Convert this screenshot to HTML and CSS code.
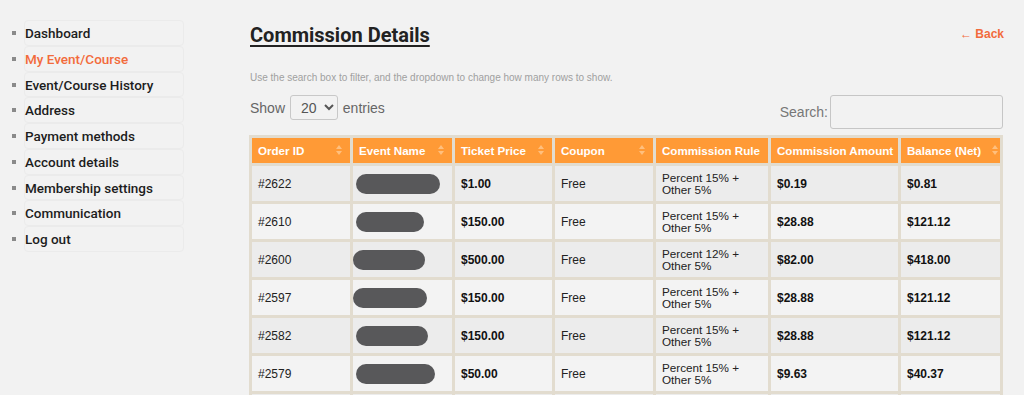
FILE: index.html
```html
<!DOCTYPE html>
<html lang="en">
<head>
    <meta charset="UTF-8">
    <meta name="viewport" content="width=device-width, initial-scale=1.0">
    <title>Commission Details</title>
    <link rel="stylesheet" href="styles.css">
</head>
<body>
    <div class="page">
        <nav class="account-nav">
            <ul>
                <li><a href="#">Dashboard</a></li>
                <li class="active"><a href="#">My Event/Course</a></li>
                <li><a href="#">Event/Course History</a></li>
                <li><a href="#">Address</a></li>
                <li><a href="#">Payment methods</a></li>
                <li><a href="#">Account details</a></li>
                <li><a href="#">Membership settings</a></li>
                <li><a href="#">Communication</a></li>
                <li><a href="#">Log out</a></li>
            </ul>
        </nav>

        <main class="content">
            <div class="title-row">
                <h2>Commission Details</h2>
                <a class="back" href="#">&larr; Back</a>
            </div>
            <p class="hint">Use the search box to filter, and the dropdown to change how many rows to show.</p>

            <div class="controls">
                <label class="length">Show
                    <select>
                        <option>10</option>
                        <option selected>20</option>
                        <option>50</option>
                    </select>
                    entries</label>
                <label class="search">Search:<input type="text"></label>
            </div>

            <table class="commission">
                <thead>
                    <tr>
                        <th class="c-id">Order ID</th>
                        <th class="c-name">Event Name</th>
                        <th class="c-price">Ticket Price</th>
                        <th class="c-coupon">Coupon</th>
                        <th class="c-rule no-sort-icon">Commission Rule</th>
                        <th class="c-amount no-sort-icon">Commission Amount</th>
                        <th class="c-net">Balance (Net)</th>
                    </tr>
                </thead>
                <tbody>
                    <tr>
                        <td>#2622</td>
                        <td><span class="redact" style="width:84px"></span></td>
                        <td><b>$1.00</b></td>
                        <td>Free</td>
                        <td class="rule">Percent 15% +<br>Other 5%</td>
                        <td><b>$0.19</b></td>
                        <td><b>$0.81</b></td>
                    </tr>
                    <tr>
                        <td>#2610</td>
                        <td><span class="redact" style="width:68px"></span></td>
                        <td><b>$150.00</b></td>
                        <td>Free</td>
                        <td class="rule">Percent 15% +<br>Other 5%</td>
                        <td><b>$28.88</b></td>
                        <td><b>$121.12</b></td>
                    </tr>
                    <tr>
                        <td>#2600</td>
                        <td><span class="redact shift" style="width:72px"></span></td>
                        <td><b>$500.00</b></td>
                        <td>Free</td>
                        <td class="rule">Percent 12% +<br>Other 5%</td>
                        <td><b>$82.00</b></td>
                        <td><b>$418.00</b></td>
                    </tr>
                    <tr>
                        <td>#2597</td>
                        <td><span class="redact shift" style="width:74px"></span></td>
                        <td><b>$150.00</b></td>
                        <td>Free</td>
                        <td class="rule">Percent 15% +<br>Other 5%</td>
                        <td><b>$28.88</b></td>
                        <td><b>$121.12</b></td>
                    </tr>
                    <tr>
                        <td>#2582</td>
                        <td><span class="redact" style="width:72px"></span></td>
                        <td><b>$150.00</b></td>
                        <td>Free</td>
                        <td class="rule">Percent 15% +<br>Other 5%</td>
                        <td><b>$28.88</b></td>
                        <td><b>$121.12</b></td>
                    </tr>
                    <tr>
                        <td>#2579</td>
                        <td><span class="redact" style="width:79px"></span></td>
                        <td><b>$50.00</b></td>
                        <td>Free</td>
                        <td class="rule">Percent 15% +<br>Other 5%</td>
                        <td><b>$9.63</b></td>
                        <td><b>$40.37</b></td>
                    </tr>
                    <tr>
                        <td>#2571</td>
                        <td><span class="redact" style="width:80px"></span></td>
                        <td><b>$50.00</b></td>
                        <td>Free</td>
                        <td class="rule">Percent 15% +<br>Other 5%</td>
                        <td><b>$9.63</b></td>
                        <td><b>$40.37</b></td>
                    </tr>
                </tbody>
            </table>
        </main>
    </div>
</body>
</html>
```

FILE: styles.css
```css
body { margin: 0; background: #f2f2f2; font-family: "Liberation Sans", Arial, sans-serif; color: #222; }
.page { display: flex; padding-top: 20px; }

/* account sidebar */
.account-nav { width: 184px; flex: none; }
.account-nav ul { margin: 0; padding: 0 0 0 24px; list-style: none; }
.account-nav li { position: relative; border: 1px solid #ebebeb; border-radius: 4px; height: 23.75px; }
.account-nav li::before { content: ""; position: absolute; left: -13px; top: 10px; width: 4px; height: 4px; background: #8a8a8a; }
.account-nav a { display: block; line-height: 24px; font-family: Roboto, "Noto Sans", sans-serif; font-weight: 500; font-size: 13.5px; color: #1d1d1d; text-decoration: none; }
.account-nav li.active a { color: #f26b3c; }

/* main column */
.content { margin-left: 66px; width: 754px; }
.title-row { display: flex; justify-content: space-between; align-items: flex-start; height: 32px; padding-top: 2px; }
.title-row h2 { margin: 0; font-family: Roboto, "Noto Sans", sans-serif; font-size: 20px; font-weight: 700; line-height: 26px; color: #222; text-decoration: underline; text-decoration-thickness: 2px; text-underline-offset: 3px; }
.back { margin-top: 5px; font-size: 12px; font-weight: 700; color: #f26b3c; text-decoration: none; }

.hint { margin: 17px 0 0; font-size: 10px; color: #a0a0a0; line-height: 13px; }

.controls { display: flex; justify-content: space-between; align-items: flex-start; margin-top: 11px; height: 40px; }
.length { font-size: 14px; color: #666; }
.length select { width: 48px; height: 25px; margin: 0 1px; padding: 0 2px 0 6px; border: 1px solid #c8c8c8; border-radius: 3px; background: #f2f2f2; font-family: "Liberation Sans", Arial, sans-serif; font-size: 14px; color: #555; }
.search { font-size: 14px; color: #777; display: flex; align-items: center; gap: 2px; margin-right: 1px; }
.search input { box-sizing: border-box; width: 173px; height: 34px; padding: 0 4px; border: 1px solid #c6c6c6; border-radius: 3px; background: #f2f2f2; }

/* commission table */
.commission { width: 754px; margin-left: -1px; table-layout: fixed; border-collapse: separate; border-spacing: 3px; background: #e2dccf; font-size: 12px; }
.commission th, .commission td { box-sizing: border-box; }
.commission th { position: relative; background: #ff9a36; color: #fff; font-size: 11.6px; font-weight: 700; text-align: left; padding: 5px 4px 5px 6px; height: 25px; line-height: 15px; white-space: nowrap; }
.commission th::after { content: ""; position: absolute; right: 8px; top: 7px; border-left: 3px solid transparent; border-right: 3px solid transparent; border-bottom: 4px solid #ffc07e; }
.commission th::before { content: ""; position: absolute; right: 8px; top: 13px; border-left: 3px solid transparent; border-right: 3px solid transparent; border-top: 4px solid #ffc07e; }
.commission th.c-net::after, .commission th.c-net::before { right: 2px; }
.commission th.no-sort-icon::after, .commission th.no-sort-icon::before { display: none; }
.commission td { padding: 6px 6px; height: 35px; line-height: 12px; color: #222; }
.commission td.rule { font-size: 11.7px; line-height: 11.5px; }
.commission tbody tr:nth-child(odd) td { background: #ececec; }
.commission tbody tr:nth-child(even) td { background: #f3f3f3; }
.commission b { font-weight: 700; color: #111; }

.c-id { width: 98px; }
.c-name { width: 99px; }
.c-price { width: 97px; }
.c-coupon { width: 98px; }
.c-rule { width: 112px; }
.c-amount { width: 127px; }
.c-net { width: 99px; }

.redact { display: inline-block; height: 20px; border-radius: 10px; background: #58585a; margin-left: -3px; vertical-align: middle; }
.redact.shift { margin-left: -6px; }
```
